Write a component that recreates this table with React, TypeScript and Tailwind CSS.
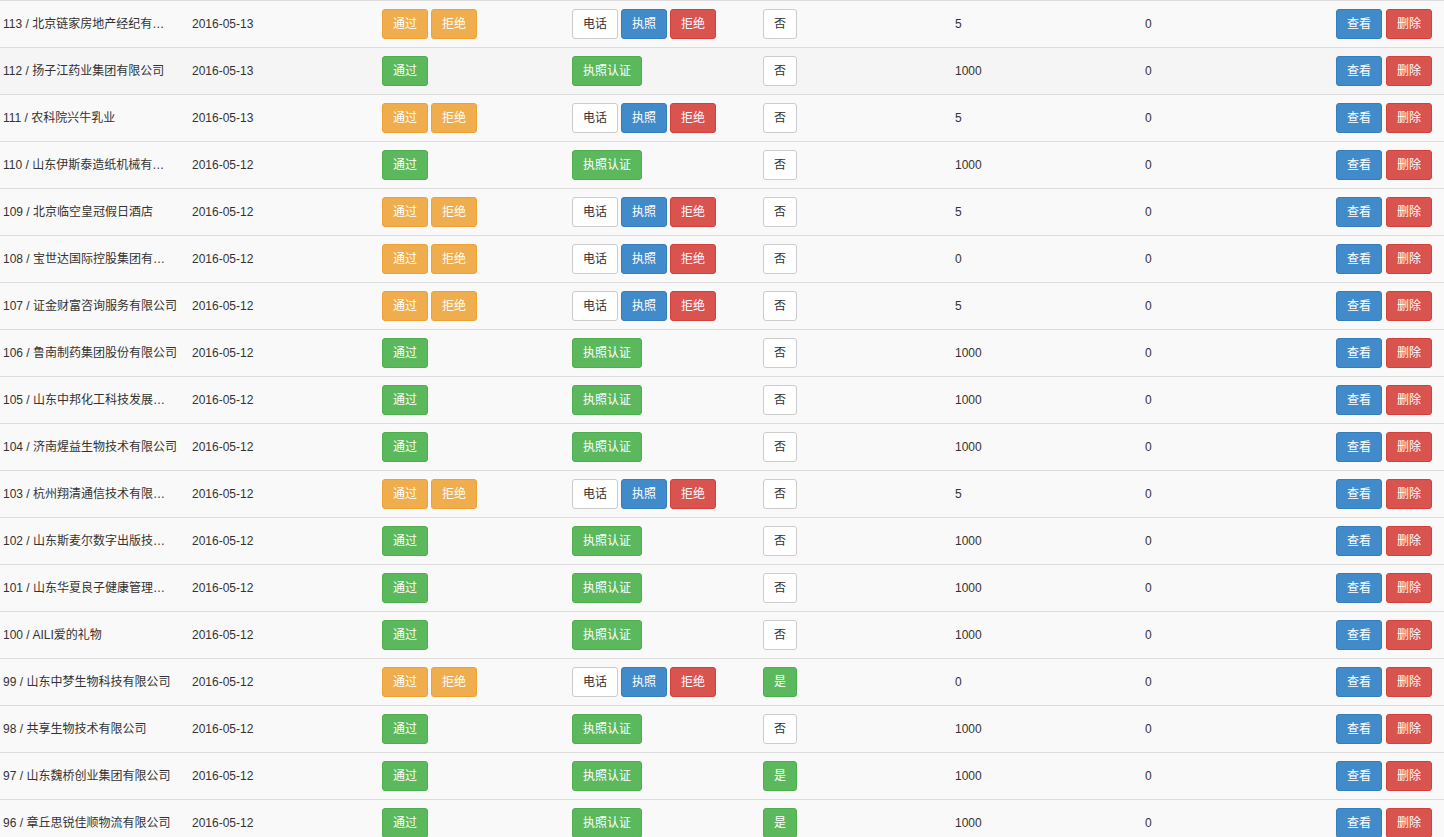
import React from "react";

// ─── 数据 ──────────────────────────────────────────────
type Row = {
  id: number;
  name: string;
  date: string;
  pending: boolean; // 待审核：通过/拒绝 + 电话/执照/拒绝
  vip: boolean;
  score: string;
  count: string;
};

const rows: Row[] = [
  { id: 113, name: "北京链家房地产经纪有…", date: "2016-05-13", pending: true, vip: false, score: "5", count: "0" },
  { id: 112, name: "扬子江药业集团有限公司", date: "2016-05-13", pending: false, vip: false, score: "1000", count: "0" },
  { id: 111, name: "农科院兴牛乳业", date: "2016-05-13", pending: true, vip: false, score: "5", count: "0" },
  { id: 110, name: "山东伊斯泰造纸机械有…", date: "2016-05-12", pending: false, vip: false, score: "1000", count: "0" },
  { id: 109, name: "北京临空皇冠假日酒店", date: "2016-05-12", pending: true, vip: false, score: "5", count: "0" },
  { id: 108, name: "宝世达国际控股集团有…", date: "2016-05-12", pending: true, vip: false, score: "0", count: "0" },
  { id: 107, name: "证金财富咨询服务有限公司", date: "2016-05-12", pending: true, vip: false, score: "5", count: "0" },
  { id: 106, name: "鲁南制药集团股份有限公司", date: "2016-05-12", pending: false, vip: false, score: "1000", count: "0" },
  { id: 105, name: "山东中邦化工科技发展…", date: "2016-05-12", pending: false, vip: false, score: "1000", count: "0" },
  { id: 104, name: "济南煋益生物技术有限公司", date: "2016-05-12", pending: false, vip: false, score: "1000", count: "0" },
  { id: 103, name: "杭州翔清通信技术有限…", date: "2016-05-12", pending: true, vip: false, score: "5", count: "0" },
  { id: 102, name: "山东斯麦尔数字出版技…", date: "2016-05-12", pending: false, vip: false, score: "1000", count: "0" },
  { id: 101, name: "山东华夏良子健康管理…", date: "2016-05-12", pending: false, vip: false, score: "1000", count: "0" },
  { id: 100, name: "AILI爱的礼物", date: "2016-05-12", pending: false, vip: false, score: "1000", count: "0" },
  { id: 99, name: "山东中梦生物科技有限公司", date: "2016-05-12", pending: true, vip: true, score: "0", count: "0" },
  { id: 98, name: "共享生物技术有限公司", date: "2016-05-12", pending: false, vip: false, score: "1000", count: "0" },
  { id: 97, name: "山东魏桥创业集团有限公司", date: "2016-05-12", pending: false, vip: true, score: "1000", count: "0" },
  { id: 96, name: "章丘思锐佳顺物流有限公司", date: "2016-05-12", pending: false, vip: true, score: "1000", count: "0" },
];

const btn =
  "inline-flex items-center justify-center h-[30px] px-[10px] rounded-[3px] border text-[12px] leading-none whitespace-nowrap";
const green = `${btn} bg-[#5cb85c] border-[#4cae4c] text-white`;
const orange = `${btn} bg-[#f0ad4e] border-[#eea236] text-white`;
const blue = `${btn} bg-[#428bca] border-[#357ebd] text-white`;
const red = `${btn} bg-[#d9534f] border-[#d43f3a] text-white`;
const white = `${btn} bg-white border-[#ccc] text-[#333]`;

const cell = "px-2 h-[46px] flex items-center whitespace-nowrap";

export default function App() {
  return (
    <div
      className="w-[1444px] h-[837px] overflow-hidden bg-white text-[12px] text-[#333]"
      style={{ fontFamily: '"Liberation Sans", "Noto Sans CJK SC", sans-serif' }}
    >
      {rows.map((r) => (
        <div
          key={r.id}
          className={`grid grid-cols-[184px_190px_190px_191px_192px_190px_191px_116px] border-t border-[#ddd] ${
            r.id === 112 ? "bg-[#f5f5f5]" : "bg-[#f9f9f9]"
          }`}
        >
          {/* 名称 */}
          <div className="pl-[3px] pr-2 h-[46px] flex items-center whitespace-nowrap">
            {r.id} / {r.name}
          </div>

          {/* 日期 */}
          <div className={cell}>{r.date}</div>

          {/* 审核 */}
          <div className={`${cell} gap-[3px]`}>
            {r.pending ? (
              <>
                <span className={orange}>通过</span>
                <span className={orange}>拒绝</span>
              </>
            ) : (
              <span className={green}>通过</span>
            )}
          </div>

          {/* 认证 */}
          <div className={`${cell} gap-[3px]`}>
            {r.pending ? (
              <>
                <span className={white}>电话</span>
                <span className={blue}>执照</span>
                <span className={red}>拒绝</span>
              </>
            ) : (
              <span className={green}>执照认证</span>
            )}
          </div>

          {/* 推荐 */}
          <div className={cell}>
            {r.vip ? <span className={green}>是</span> : <span className={white}>否</span>}
          </div>

          <div className={cell}>{r.score}</div>
          <div className={cell}>{r.count}</div>

          {/* 操作 */}
          <div className={`${cell} gap-1`}>
            <span className={blue}>查看</span>
            <span className={red}>删除</span>
          </div>
        </div>
      ))}
    </div>
  );
}
